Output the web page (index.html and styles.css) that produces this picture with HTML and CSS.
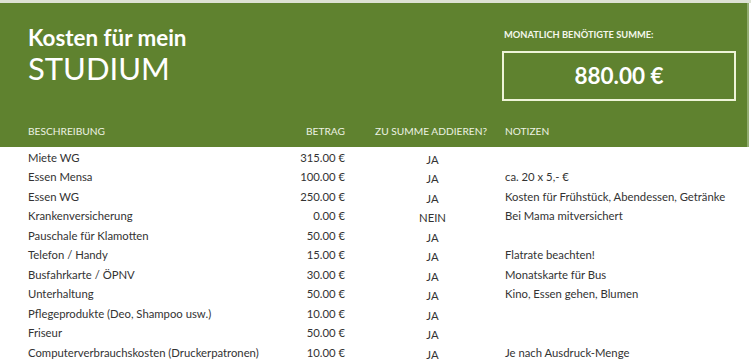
FILE: index.html
```html
<!DOCTYPE html>
<html lang="de">
<head>
<meta charset="utf-8">
<title>Kosten für mein Studium</title>
<link rel="stylesheet" href="styles.css">
</head>
<body>
<div class="page">
  <header class="panel">
    <div class="top">
      <div class="title">
        <div class="title-small">Kosten für mein</div>
        <div class="title-big">STUDIUM</div>
      </div>
      <div class="summary">
        <div class="summary-label">MONATLICH BENÖTIGTE SUMME:</div>
        <div class="summary-box">880.00 €</div>
      </div>
    </div>
    <div class="row head">
      <div class="c-desc">BESCHREIBUNG</div>
      <div class="c-amt">BETRAG</div>
      <div class="c-add">ZU SUMME ADDIEREN?</div>
      <div class="c-note">NOTIZEN</div>
    </div>
  </header>
  <div class="rows">
    <div class="row"><div class="c-desc">Miete WG</div><div class="c-amt">315.00 €</div><div class="c-add">JA</div><div class="c-note"></div></div>
    <div class="row"><div class="c-desc">Essen Mensa</div><div class="c-amt">100.00 €</div><div class="c-add">JA</div><div class="c-note">ca. 20 x 5,- €</div></div>
    <div class="row"><div class="c-desc">Essen WG</div><div class="c-amt">250.00 €</div><div class="c-add">JA</div><div class="c-note">Kosten für Frühstück, Abendessen, Getränke</div></div>
    <div class="row"><div class="c-desc">Krankenversicherung</div><div class="c-amt">0.00 €</div><div class="c-add">NEIN</div><div class="c-note">Bei Mama mitversichert</div></div>
    <div class="row"><div class="c-desc">Pauschale für Klamotten</div><div class="c-amt">50.00 €</div><div class="c-add">JA</div><div class="c-note"></div></div>
    <div class="row"><div class="c-desc">Telefon / Handy</div><div class="c-amt">15.00 €</div><div class="c-add">JA</div><div class="c-note">Flatrate beachten!</div></div>
    <div class="row"><div class="c-desc">Busfahrkarte / ÖPNV</div><div class="c-amt">30.00 €</div><div class="c-add">JA</div><div class="c-note">Monatskarte für Bus</div></div>
    <div class="row"><div class="c-desc">Unterhaltung</div><div class="c-amt">50.00 €</div><div class="c-add">JA</div><div class="c-note">Kino, Essen gehen, Blumen</div></div>
    <div class="row"><div class="c-desc">Pflegeprodukte (Deo, Shampoo usw.)</div><div class="c-amt">10.00 €</div><div class="c-add">JA</div><div class="c-note"></div></div>
    <div class="row"><div class="c-desc">Friseur</div><div class="c-amt">50.00 €</div><div class="c-add">JA</div><div class="c-note"></div></div>
    <div class="row"><div class="c-desc">Computerverbrauchskosten (Druckerpatronen)</div><div class="c-amt">10.00 €</div><div class="c-add">JA</div><div class="c-note">Je nach Ausdruck-Menge</div></div>
  </div>
</div>
</body>
</html>
```

FILE: styles.css
```css
* { box-sizing: border-box; }
html, body { margin: 0; padding: 0; background: #fff; }
body {
  font-family: Lato, "Open Sans", sans-serif;
  color: #333;
  width: 751px;
  height: 362px;
  overflow: hidden;
}
.page {
  border-top: 3px solid #dde2d4;
}
.panel {
  width: 749px;
  background: #5f822f;
  border-right: 2px solid #93ad72;
  color: #fff;
  height: 144px;
}
.top {
  display: flex;
  justify-content: space-between;
  padding: 22px 11px 0 28px;
  height: 117px;
}
.title-small {
  font-size: 22.4px;
  font-weight: 700;
  line-height: 26px;
}
.title-big {
  font-size: 31px;
  font-weight: 400;
  line-height: 35px;
}
.summary {
  width: 234px;
  padding-top: 3px;
}
.summary-label {
  font-size: 9.3px;
  font-weight: 700;
  line-height: 14px;
  padding-left: 2px;
  color: #f4f7ec;
}
.summary-box {
  margin-top: 9px;
  height: 50px;
  border: 2px solid #eef4d8;
  text-align: center;
  font-size: 22.5px;
  font-weight: 700;
  line-height: 45px;
}
.row {
  display: grid;
  grid-template-columns: 245px 72px 160px 1fr;
  padding-left: 28px;
  height: 19.5px;
  align-items: center;
  font-size: 11.3px;
  line-height: 16px;
  white-space: nowrap;
}
.row.head {
  font-size: 10.2px;
  color: #edf2e3;
  height: 22px;
  align-items: center;
}
.c-amt { text-align: right; }
.c-add {
  text-align: center;
  padding: 0 15px 0 30px;
}
.rows .c-add { position: relative; top: 2px; }
.row.head .c-add { text-align: left; }
.rows { padding-top: 1px; }
```
